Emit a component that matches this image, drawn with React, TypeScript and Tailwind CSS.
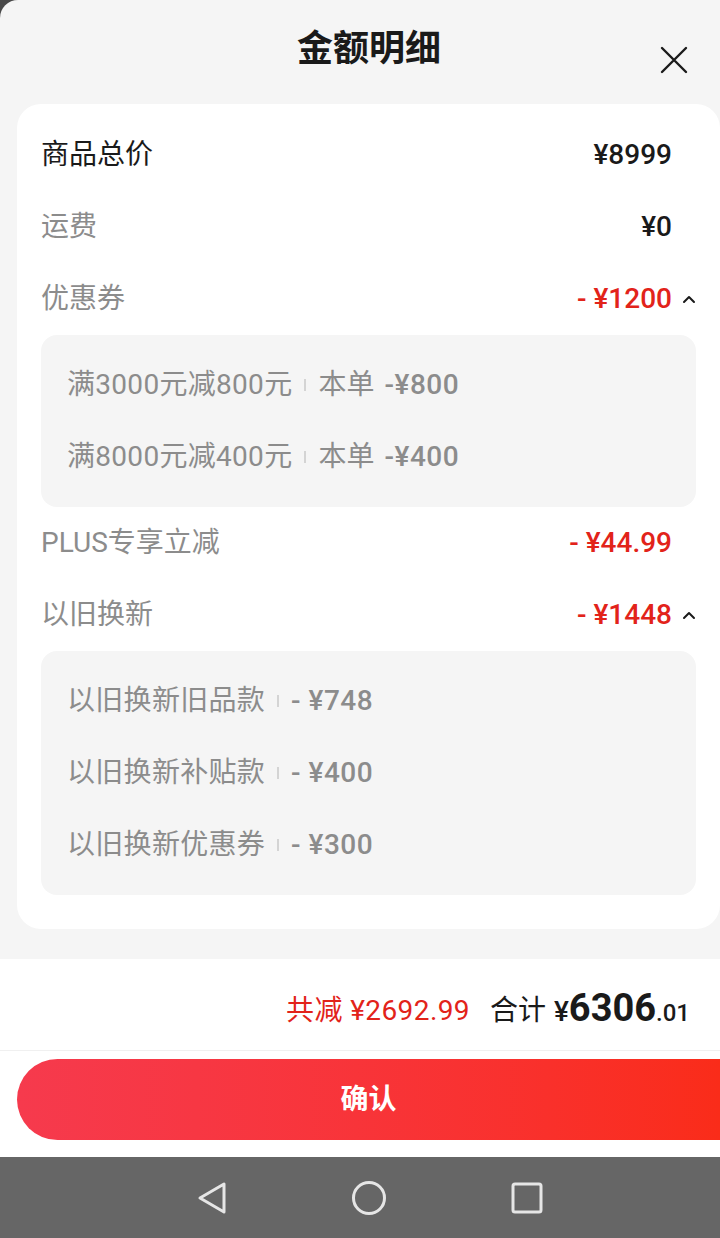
import React from 'react';

const FONT = "font-['Roboto','Noto_Sans_CJK_SC',sans-serif]";

type Sub = { label: string; note?: string; amount: string };
type Row = {
  label: string;
  amount: string;
  dark?: boolean;
  red?: boolean;
  open?: boolean;
  subs?: Sub[];
};

const rows: Row[] = [
  { label: '商品总价', amount: '¥8999', dark: true },
  { label: '运费', amount: '¥0' },
  {
    label: '优惠券',
    amount: '- ¥1200',
    red: true,
    open: true,
    subs: [
      { label: '满3000元减800元', note: '本单', amount: '-¥800' },
      { label: '满8000元减400元', note: '本单', amount: '-¥400' },
    ],
  },
  { label: 'PLUS专享立减', amount: '- ¥44.99', red: true },
  {
    label: '以旧换新',
    amount: '- ¥1448',
    red: true,
    open: true,
    subs: [
      { label: '以旧换新旧品款', amount: '- ¥748' },
      { label: '以旧换新补贴款', amount: '- ¥400' },
      { label: '以旧换新优惠券', amount: '- ¥300' },
    ],
  },
];

const Caret = () => (
  <svg width="14" height="10" viewBox="0 0 14 10" fill="none">
    <path d="M2 8 L7 3 L12 8" stroke="#1a1a1a" strokeWidth="2" strokeLinecap="round" strokeLinejoin="round" />
  </svg>
);

const DetailRow = ({ row }: { row: Row }) => (
  <>
    <div className="flex h-[72px] items-center justify-between">
      <span className={`text-[28px] ${row.dark ? 'text-[#1a1a1a]' : 'text-[#8c8c8c]'}`}>{row.label}</span>
      <div className="flex items-center">
        <span className={`text-[28px] font-medium ${row.red ? 'text-[#e2231a]' : 'text-[#1a1a1a]'}`}>
          {row.amount}
        </span>
        <span className="flex w-[24px] justify-end">{row.open && <Caret />}</span>
      </div>
    </div>
    {row.subs && (
      <div className="rounded-[16px] bg-[#f5f5f5] py-[14px] pl-[26px]">
        {row.subs.map((s) => (
          <div key={s.label} className="flex h-[72px] items-center text-[28px] text-[#8c8c8c]">
            <span className="tracking-[0.3px]">{s.label}</span>
            <span className="mx-[12px] h-[12px] w-[2px] bg-[#d4d4d4]" />
            {s.note && <span className="mr-[10px]">{s.note}</span>}
            <span className="font-medium tracking-[0.5px]">{s.amount}</span>
          </div>
        ))}
      </div>
    )}
  </>
);

export default function App() {
  return (
    <div className={`h-[1238px] w-[720px] overflow-hidden bg-[#4a4a4a] ${FONT}`}>
      <div className="flex h-[1157px] flex-col rounded-tl-[18px] bg-[#f5f5f5]">
        {/* header */}
        <div className="relative flex h-[104px] items-start justify-center pl-[18px]">
          <h1 className="mt-[22px] text-[36px] font-bold text-[#1a1a1a]">金额明细</h1>
          <svg className="absolute right-[32px] top-[46px]" width="28" height="28" viewBox="0 0 28 28">
            <path d="M2 2 L26 26 M26 2 L2 26" stroke="#1a1a1a" strokeWidth="2.4" strokeLinecap="round" />
          </svg>
        </div>

        {/* detail card */}
        <div className="ml-[17px] rounded-[24px] bg-white pb-[34px] pl-[24px] pr-[24px] pt-[15px]">
          {rows.map((r) => (
            <DetailRow key={r.label} row={r} />
          ))}
        </div>

        <div className="h-[30px]" />

        {/* footer */}
        <div className="flex flex-1 flex-col bg-white">
          <div className="flex h-[92px] items-center justify-end border-b border-[#f0f0f0] pr-[30px] pt-[12px]">
            <span className="text-[28px] tracking-[0.4px] text-[#e2231a]">共减 ¥2692.99</span>
            <span className="ml-[20px] text-[28px] text-[#1a1a1a]">合计</span>
            <span className="ml-[8px] flex items-baseline text-[#1a1a1a]">
              <span className="text-[28px] font-medium">¥</span>
              <span className="text-[38px] font-bold leading-none">6306</span>
              <span className="text-[24px] font-medium">.01</span>
            </span>
          </div>
          <div className="pl-[17px] pt-[8px]">
            <button className="flex h-[81px] w-full items-center justify-center rounded-l-full bg-gradient-to-r from-[#f63a4d] to-[#fa2c19] text-[28px] font-bold text-white">
              确认
            </button>
          </div>
        </div>
      </div>

      {/* system nav bar */}
      <div className="flex h-[81px] items-center justify-center gap-[124px] bg-[#666666] pl-[20px]">
        <svg width="30" height="34" viewBox="0 0 30 34" fill="none">
          <path d="M27 3 L27 31 L3 17 Z" stroke="#e6e6e6" strokeWidth="3" strokeLinejoin="round" />
        </svg>
        <svg width="36" height="36" viewBox="0 0 36 36" fill="none">
          <circle cx="18" cy="18" r="15.5" stroke="#e6e6e6" strokeWidth="3" />
        </svg>
        <svg width="32" height="32" viewBox="0 0 32 32" fill="none">
          <rect x="2" y="2" width="28" height="28" rx="2" stroke="#e6e6e6" strokeWidth="3" />
        </svg>
      </div>
    </div>
  );
}
